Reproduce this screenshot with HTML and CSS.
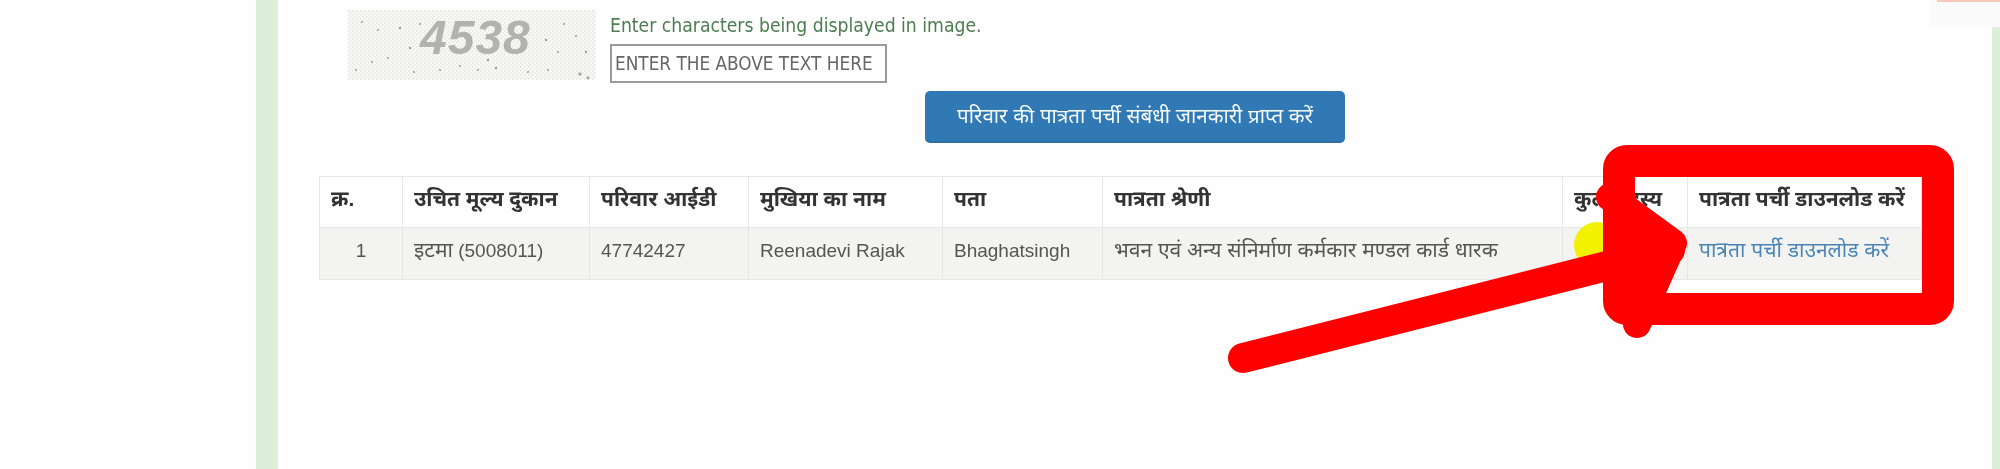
FILE: index.html
```html
<!DOCTYPE html>
<html lang="hi">
<head>
<meta charset="utf-8">
<title>पात्रता पर्ची</title>
<link rel="stylesheet" href="styles.css">
</head>
<body>
<div class="page">
  <div class="gutter"></div>
  <div class="strip"></div>
  <main class="content">
    <div class="captcha-row">
      <div class="captcha">
        <svg class="captcha-noise" viewBox="0 0 248 70" aria-hidden="true">
          <defs>
            <pattern id="stipple" width="4" height="4" patternUnits="userSpaceOnUse">
              <rect width="4" height="4" fill="#f8f8f6"/>
              <rect width="1.4" height="1.4" fill="#dfdfdc"/>
              <rect x="2" y="2" width="1.4" height="1.4" fill="#e4e4e1"/>
            </pattern>
          </defs>
          <rect width="248" height="70" fill="url(#stipple)"/>
          <g fill="#9c9c9a">
            <circle cx="14" cy="12" r="1"/><circle cx="30" cy="20" r="1"/><circle cx="52" cy="18" r="1.2"/><circle cx="40" cy="48" r="1"/>
            <circle cx="24" cy="52" r="1"/><circle cx="62" cy="38" r="1.2"/><circle cx="72" cy="14" r="1"/><circle cx="176" cy="18" r="1"/>
            <circle cx="198" cy="30" r="1.2"/><circle cx="210" cy="42" r="1"/><circle cx="228" cy="26" r="1"/><circle cx="238" cy="42" r="1.2"/>
            <circle cx="232" cy="64" r="1.6"/><circle cx="240" cy="68" r="1.4"/><circle cx="200" cy="60" r="1"/><circle cx="180" cy="62" r="1"/>
            <circle cx="140" cy="50" r="1.2"/><circle cx="148" cy="58" r="1.2"/><circle cx="130" cy="60" r="1"/><circle cx="112" cy="56" r="1"/>
            <circle cx="92" cy="60" r="1"/><circle cx="66" cy="62" r="1"/><circle cx="8" cy="60" r="1"/><circle cx="216" cy="14" r="1"/>
          </g>
        </svg>
        <span class="captcha-text">4538</span>
      </div>
      <div class="captcha-field">
        <label class="captcha-label" for="cap">Enter characters being displayed in image.</label>
        <input class="captcha-input" id="cap" type="text" placeholder="ENTER THE ABOVE TEXT HERE">
      </div>
    </div>
    <div class="action-row">
      <button class="primary" type="button">परिवार की पात्रता पर्ची संबंधी जानकारी प्राप्त करें</button>
    </div>
    <table class="slip">
      <colgroup>
        <col class="c1"><col class="c2"><col class="c3"><col class="c4"><col class="c5"><col class="c6"><col class="c7"><col class="c8">
      </colgroup>
      <thead>
        <tr>
          <th>क्र.</th><th>उचित मूल्य दुकान</th><th>परिवार आईडी</th><th>मुखिया का नाम</th><th>पता</th><th>पात्रता श्रेणी</th><th>कुल सदस्य</th><th>पात्रता पर्ची डाउनलोड करें</th>
        </tr>
      </thead>
      <tbody>
        <tr>
          <td class="num">1</td><td><span class="hi">इटमा</span> (5008011)</td><td>47742427</td><td>Reenadevi Rajak</td><td>Bhaghatsingh</td><td><span class="hi">भवन एवं अन्य संनिर्माण कर्मकार मण्डल कार्ड धारक</span></td><td class="num">4</td><td><a href="#" class="dl hi">पात्रता पर्ची डाउनलोड करें</a></td>
        </tr>
      </tbody>
    </table>
  </main>
  <div class="strip-right"></div>
  <div class="corner"><div class="corner-bar"></div></div>
  <svg class="markup" viewBox="0 0 2000 469" aria-hidden="true">
    <circle cx="1597" cy="245" r="23" fill="#f2f200"/>
    <rect x="1619" y="161" width="319" height="148" rx="8" fill="none" stroke="#fe0000" stroke-width="32"/>
    <path d="M1620 200 L1672 243 L1640 318 L1624 262 Z" fill="#fe0000"/>
    <path d="M1243 358 L1670 250" fill="none" stroke="#fe0000" stroke-width="30" stroke-linecap="round"/>
    <path d="M1610 197 L1673 243 L1637 324" fill="none" stroke="#fe0000" stroke-width="28" stroke-linecap="round" stroke-linejoin="round"/>
  </svg>
</div>
</body>
</html>
```
FILE: styles.css
```css
* { box-sizing: border-box; }
html, body { margin: 0; padding: 0; background: #fefefe; }
.page {
  position: relative;
  display: flex;
  width: 2000px;
  height: 469px;
  overflow: hidden;
  font-family: "Liberation Sans", "Noto Sans", "Noto Sans Devanagari", Lohit, sans-serif;
}
.gutter { width: 256px; flex: none; }
.strip { width: 22px; flex: none; background: #deefd9; }
.strip-right { width: 8px; flex: none; background: #deefd9; margin-top: 27px; }
.content { flex: 1; min-width: 0; padding-top: 10px; background: #fefefe; filter: blur(0.45px); }

.captcha-row { display: flex; gap: 15px; padding-left: 70px; height: 73px; }
.captcha { position: relative; width: 248px; height: 70px; overflow: hidden; }
.captcha-noise { display: block; width: 248px; height: 70px; }
.captcha-text {
  position: absolute;
  left: 72px;
  top: 0;
  font: italic bold 48px/56px "Liberation Sans", sans-serif;
  letter-spacing: 1px;
  color: #b2b2b0;
}
.captcha-field { display: flex; flex-direction: column; margin-left: -1px; }
.captcha-label {
  font: 19.2px/24px "DejaVu Sans Condensed", "DejaVu Sans", sans-serif;
  color: #4d7d50;
  height: 34px;
  padding-top: 4px;
}
.captcha-input {
  width: 277px;
  height: 39px;
  padding: 0 3px;
  border: 2px solid #9a9a9a;
  background: #fff;
  font: 18.8px "DejaVu Sans Condensed", "DejaVu Sans", sans-serif;
  outline: none;
}
.captcha-input::placeholder { color: #666; opacity: 1; }

.action-row { display: flex; justify-content: center; margin-top: 8px; }
.primary {
  width: 420px;
  height: 52px;
  border: 0;
  border-bottom: 2px solid #2e6da4;
  border-radius: 5px;
  background: #3079b5;
  color: #f7fafc;
  font: 20.5px "Liberation Sans", "Noto Sans", sans-serif;
  padding-bottom: 4px;
}

.slip {
  margin: 33px 0 0 41px;
  width: 1602px;
  table-layout: fixed;
  border-collapse: collapse;
  font-size: 19px;
  line-height: 26px;
}
.c1 { width: 83px; } .c2 { width: 187px; } .c3 { width: 159px; } .c4 { width: 194px; }
.c5 { width: 160px; } .c6 { width: 460px; } .c7 { width: 125px; } .c8 { width: 234px; }
.slip th, .slip td {
  border: 1px solid #e6e6e6;
  padding: 0 11px 6px;
  text-align: left;
  white-space: nowrap;
  overflow: hidden;
}
.slip th { height: 51px; font-weight: bold; font-size: 21px; color: #333; background: #fefefe; }
.slip td { height: 52px; color: #555; background: #f3f3f2; }
.slip td.num { text-align: center; }
.hi { font-size: 21px; line-height: 20px; }
.dl { color: #4a85b5; text-decoration: none; }

.corner { position: absolute; right: 0; top: 0; width: 70px; height: 27px; background: #fafafa; }
.corner-bar { height: 2px; margin-left: 7px; background: #f6c9b4; }
.markup { position: absolute; left: 0; top: 0; width: 2000px; height: 469px; pointer-events: none; }
```
